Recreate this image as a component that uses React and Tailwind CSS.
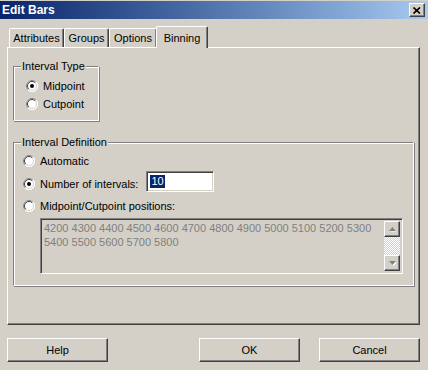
const font = { fontFamily: '"Liberation Sans", Arial, sans-serif' }

function Radio({ checked }) {
    return (
        <svg width="12" height="12" viewBox="0 0 12 12" className="shrink-0">
            <circle cx="6" cy="6" r="5.5" fill="#fff" stroke="#fff" />
            <path d="M2.1 9.9A5.5 5.5 0 0 1 9.9 2.1" stroke="#808080" fill="none" />
            <path d="M9.9 2.1A5.5 5.5 0 0 1 2.1 9.9" stroke="#fff" fill="none" />
            <path d="M2.8 9.2A4.5 4.5 0 0 1 9.2 2.8" stroke="#404040" fill="none" />
            <path d="M9.2 2.8A4.5 4.5 0 0 1 2.8 9.2" stroke="#d4d0c8" fill="none" />
            {checked && <circle cx="6" cy="6" r="2" fill="#000" />}
        </svg>
    )
}

function Group({ label, className, children }) {
    return (
        <div className={`relative border border-t-[#808080] border-l-[#808080] border-b-white border-r-white shadow-[inset_1px_1px_0_#fff,1px_1px_0_#808080] ${className}`}>
            <span className="absolute left-[7px] top-[-8px] bg-[#d4d0c8] px-[1px] leading-[14px]">{label}</span>
            {children}
        </div>
    )
}

function Button({ children, className }) {
    return (
        <button className={`h-[24px] w-[101px] bg-[#d4d0c8] border border-t-white border-l-white border-b-[#404040] border-r-[#404040] shadow-[inset_-1px_-1px_0_#808080] text-[11px] text-black ${className}`}>
            {children}
        </button>
    )
}

function Arrow({ up }) {
    return (
        <div className="w-[16px] h-[16px] bg-[#d4d0c8] border border-t-white border-l-white border-b-[#404040] border-r-[#404040] shadow-[inset_-1px_-1px_0_#808080] flex items-center justify-center">
            <svg width="7" height="5" viewBox="0 0 7 5">
                {up ? (
                    <>
                        <path d="M4.5 1 L8 4.5 L1 4.5 Z" fill="#fff" />
                        <path d="M3.5 0 L7 4 L0 4 Z" fill="#808080" />
                    </>
                ) : (
                    <>
                        <path d="M1 1 L8 1 L4.5 5 Z" fill="#fff" />
                        <path d="M0 0 L7 0 L3.5 4 Z" fill="#808080" />
                    </>
                )}
            </svg>
        </div>
    )
}

export default function App() {
    const tabs = [
        { name: 'Attributes', w: 'w-[55px]' },
        { name: 'Groups', w: 'w-[45px]' },
        { name: 'Options', w: 'w-[48px]' },
    ]

    return (
        <div style={font} className="w-[428px] h-[370px] bg-[#d4d0c8] text-[11px] text-black overflow-hidden flex flex-col">
            <div className="h-[18px] mt-[1px] bg-gradient-to-r from-[#0a246a] to-[#a6caf0] flex items-center justify-between pl-[2px] pr-[3px]">
                <span className="text-white font-bold text-[12px] leading-none">Edit Bars</span>
                <div className="w-[16px] h-[14px] bg-[#d4d0c8] border border-t-white border-l-white border-b-[#404040] border-r-[#404040] shadow-[inset_-1px_-1px_0_#808080] flex items-center justify-center">
                    <svg width="8" height="7" viewBox="0 0 8 7">
                        <path d="M0.5 0.5 L7 6.5 M7 0.5 L0.5 6.5" stroke="#000" strokeWidth="1.7" />
                    </svg>
                </div>
            </div>

            <div className="flex items-end pl-[9px] mt-[6px] h-[22px] relative z-10">
                {tabs.map(t => (
                    <div key={t.name} className={`${t.w} h-[19px] border-t border-l border-t-white border-l-white border-r border-r-[#404040] shadow-[inset_-1px_0_0_#808080] rounded-t-[2px] flex items-center justify-center`}>
                        {t.name}
                    </div>
                ))}
                <div className="w-[52px] h-[22px] ml-[-1px] bg-[#d4d0c8] border-t border-l border-t-white border-l-white border-r border-r-[#404040] shadow-[inset_-1px_0_0_#808080] rounded-t-[2px] flex items-start justify-center pt-[3px] mb-[-1px]">
                    Binning
                </div>
            </div>

            <div className="ml-[7px] w-[413px] h-[278px] border border-t-white border-l-white border-b-[#404040] border-r-[#404040] shadow-[inset_-1px_-1px_0_#808080] px-[5px] flex flex-col">
                <Group label="Interval Type" className="mt-[18px] w-[86px] h-[55px] flex flex-col">
                    <div className="flex items-center gap-[5px] pl-[12px] mt-[12px] h-[14px]">
                        <Radio checked />
                        <span>Midpoint</span>
                    </div>
                    <div className="flex items-center gap-[5px] pl-[12px] mt-[4px] h-[14px]">
                        <Radio />
                        <span>Cutpoint</span>
                    </div>
                </Group>

                <Group label="Interval Definition" className="mt-[21px] w-[401px] h-[144px] flex flex-col">
                    <div className="flex items-center gap-[5px] pl-[9px] mt-[11px] h-[14px]">
                        <Radio />
                        <span>Automatic</span>
                    </div>
                    <div className="flex items-start pl-[9px] mt-[3px] h-[21px]">
                        <div className="flex items-center mt-[6px] h-[14px]">
                            <Radio checked />
                            <span className="ml-[5px]">Number of intervals:</span>
                        </div>
                        <div className="ml-[8px] w-[68px] h-[21px] bg-white border border-t-[#808080] border-l-[#808080] border-b-white border-r-white shadow-[inset_1px_1px_0_#404040,inset_-1px_-1px_0_#d4d0c8] flex items-center pl-[3px]">
                            <span className="bg-[#0a246a] text-white leading-[13px] px-[1px]">10</span>
                        </div>
                    </div>
                    <div className="flex items-center gap-[5px] pl-[9px] mt-[7px] h-[14px]">
                        <Radio />
                        <span>Midpoint/Cutpoint positions:</span>
                    </div>
                    <div className="ml-[26px] mt-[5px] w-[363px] h-[56px] border border-t-[#808080] border-l-[#808080] border-b-white border-r-white shadow-[inset_1px_1px_0_#404040,inset_-1px_-1px_0_#d4d0c8] flex p-[2px]">
                        <div className="flex-1 text-[#808080] leading-[14px] pl-[1px]">
                            <div>4200 4300 4400 4500 4600 4700 4800 4900 5000 5100 5200 5300</div>
                            <div>5400 5500 5600 5700 5800</div>
                        </div>
                        <div className="w-[16px] flex flex-col">
                            <Arrow up />
                            <div className="flex-1 bg-[repeating-conic-gradient(#ffffff_0_25%,#d4d0c8_0_50%)] bg-[length:2px_2px]" />
                            <Arrow />
                        </div>
                    </div>
                </Group>
            </div>

            <div className="flex mt-[13px] pl-[7px]">
                <Button>Help</Button>
                <Button className="ml-[91px]">OK</Button>
                <Button className="ml-[19px]">Cancel</Button>
            </div>
        </div>
    )
}
